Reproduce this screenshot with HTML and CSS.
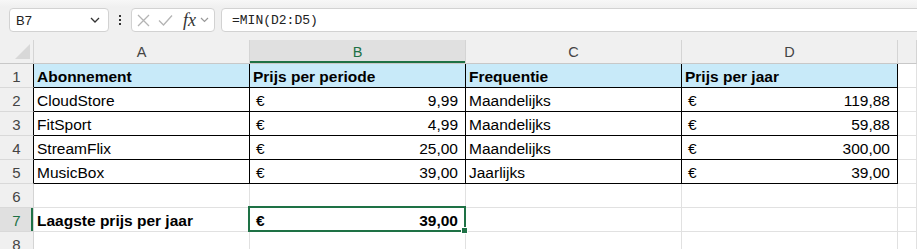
FILE: index.html
```html
<!DOCTYPE html>
<html lang="nl">
<head>
  <meta charset="UTF-8">
  <title>Abonnementen</title>
  <link rel="stylesheet" href="styles.css">
</head>
<body>
  <div class="toolbar">
    <div class="namebox">
      <span>B7</span>
      <svg class="chev" width="10" height="6" viewBox="0 0 10 6"><path d="M1 1 L5 5 L9 1" fill="none" stroke="#333" stroke-width="1.3"/></svg>
    </div>
    <div class="grip"><i></i><i></i><i></i></div>
    <div class="fxbox">
      <svg width="13" height="13" viewBox="0 0 13 13"><path d="M1 1 L12 12 M12 1 L1 12" stroke="#b4b4b4" stroke-width="1.3"/></svg>
      <svg width="15" height="13" viewBox="0 0 15 13"><path d="M1 6.5 L5.5 11 L14 1.5" fill="none" stroke="#b4b4b4" stroke-width="1.3"/></svg>
      <span class="fx">fx</span>
      <svg width="9" height="6" viewBox="0 0 9 6"><path d="M1 1 L4.5 4.5 L8 1" fill="none" stroke="#999" stroke-width="1.2"/></svg>
    </div>
    <div class="formula">=MIN(D2:D5)</div>
  </div>

  <!-- sheet: row header + A..D + a slice of E -->
  <div class="sheet">
    <div class="c hd corner"><span class="tri"></span></div>
    <div class="c hd">A</div>
    <div class="c hd on">B</div>
    <div class="c hd">C</div>
    <div class="c hd">D</div>
    <div class="c hd"></div>

    <div class="c rh edge">1</div>
    <div class="c t th">Abonnement</div>
    <div class="c t th">Prijs per periode</div>
    <div class="c t th">Frequentie</div>
    <div class="c t th">Prijs per jaar</div>
    <div class="c"></div>

    <div class="c rh edge">2</div>
    <div class="c t">CloudStore</div>
    <div class="c t acc"><span>€</span><span>9,99</span></div>
    <div class="c t">Maandelijks</div>
    <div class="c t acc"><span>€</span><span>119,88</span></div>
    <div class="c"></div>

    <div class="c rh edge">3</div>
    <div class="c t">FitSport</div>
    <div class="c t acc"><span>€</span><span>4,99</span></div>
    <div class="c t">Maandelijks</div>
    <div class="c t acc"><span>€</span><span>59,88</span></div>
    <div class="c"></div>

    <div class="c rh edge">4</div>
    <div class="c t">StreamFlix</div>
    <div class="c t acc"><span>€</span><span>25,00</span></div>
    <div class="c t">Maandelijks</div>
    <div class="c t acc"><span>€</span><span>300,00</span></div>
    <div class="c"></div>

    <div class="c rh edge">5</div>
    <div class="c t">MusicBox</div>
    <div class="c t acc"><span>€</span><span>39,00</span></div>
    <div class="c t">Jaarlijks</div>
    <div class="c t acc"><span>€</span><span>39,00</span></div>
    <div class="c"></div>

    <div class="c rh">6</div>
    <div class="c"></div>
    <div class="c"></div>
    <div class="c"></div>
    <div class="c"></div>
    <div class="c"></div>

    <div class="c rh on">7</div>
    <div class="c bold">Laagste prijs per jaar</div>
    <div class="c acc bold sel"><span>€</span><span>39,00</span></div>
    <div class="c"></div>
    <div class="c"></div>
    <div class="c"></div>

    <div class="c rh">8</div>
    <div class="c"></div>
    <div class="c"></div>
    <div class="c"></div>
    <div class="c"></div>
    <div class="c"></div>
  </div>
</body>
</html>
```

FILE: styles.css
```css
body {
    margin: 0;
    background: #f0f0f0;
    font-family: "Liberation Sans", Arial, sans-serif;
    overflow: hidden;
}

/* formula bar */

.toolbar {
    height: 40px;
    box-sizing: border-box;
    padding: 8px 0 0 9px;
    display: flex;
    align-items: flex-start;
    background: linear-gradient(#f7f7f7, #f0f0f0 7px);
}

.namebox,
.fxbox,
.formula {
    height: 24px;
    box-sizing: border-box;
    background: #fff;
    border: 1px solid #d2d2d2;
    border-radius: 4px;
    display: flex;
    align-items: center;
}

.namebox {
    width: 100px;
    padding: 0 8px 0 6px;
    justify-content: space-between;
    font-size: 13px;
    color: #222;
}

.grip {
    width: 22px;
    height: 24px;
    display: flex;
    flex-direction: column;
    align-items: center;
    justify-content: center;
    gap: 2px;
}

.grip i {
    width: 2px;
    height: 2px;
    background: #333;
}

.fxbox {
    width: 84px;
    padding: 0 3px 0 5px;
    gap: 8px;
}

.fx {
    font-family: "Liberation Serif", serif;
    font-style: italic;
    font-size: 18px;
    color: #333;
    line-height: 1;
    margin-left: 2px;
    margin-right: -4px;
}

.formula {
    flex: 1;
    margin-left: 6px;
    margin-right: -6px;
    padding-left: 10px;
    font-family: "Liberation Mono", monospace;
    font-size: 13px;
    color: #222;
}

/* grid */

.sheet {
    display: grid;
    grid-template-columns: 34px repeat(4, 216px) 1fr;
    grid-auto-rows: 24px;
    background: #fff;
}

.c {
    box-sizing: border-box;
    border-right: 1px solid #e1e1e1;
    border-bottom: 1px solid #e1e1e1;
    padding: 0 3px 1px 3px;
    display: flex;
    align-items: flex-end;
    font-size: 15.5px;
    line-height: 18px;
    color: #000;
    white-space: nowrap;
    overflow: hidden;
}

.hd {
    background: #f0f0f0;
    border-right-color: #d4d4d4;
    border-bottom-color: #c8c8c8;
    justify-content: center;
    font-size: 14.5px;
    color: #444;
    padding-bottom: 2px;
}

.hd.on {
    background: #e0e0e0;
    color: #1e7145;
    box-shadow: inset 0 -2px 0 #1e7145;
}

.corner {
    position: relative;
}

.tri {
    position: absolute;
    right: 3px;
    bottom: 4px;
    width: 0;
    height: 0;
    border-left: 15px solid transparent;
    border-bottom: 15px solid #d8d8d8;
}

.rh {
    background: #f0f0f0;
    border-right-color: #d4d4d4;
    border-bottom-color: #d9d9d9;
    justify-content: center;
    font-size: 15px;
    color: #444;
}

.rh.edge {
    border-right-color: #000;
}

.rh.on {
    background: #e0e0e0;
    color: #1e7145;
    box-shadow: inset -2px 0 0 #1e7145;
}

.t {
    border-right-color: #000;
    border-bottom-color: #000;
}

.th {
    background: #c8eaf9;
    font-weight: bold;
}

.bold {
    font-weight: bold;
}

.acc {
    justify-content: space-between;
    padding: 0 7px 1px 6px;
}

.sel {
    position: relative;
    overflow: visible;
}

.sel::before {
    content: "";
    position: absolute;
    left: -2px;
    top: -2px;
    right: -1px;
    bottom: -1px;
    border: 2px solid #1e7145;
}

.sel::after {
    content: "";
    position: absolute;
    right: -2px;
    bottom: -2px;
    width: 5px;
    height: 5px;
    background: #1e7145;
    box-shadow: 0 0 0 1px #fff;
}
```
